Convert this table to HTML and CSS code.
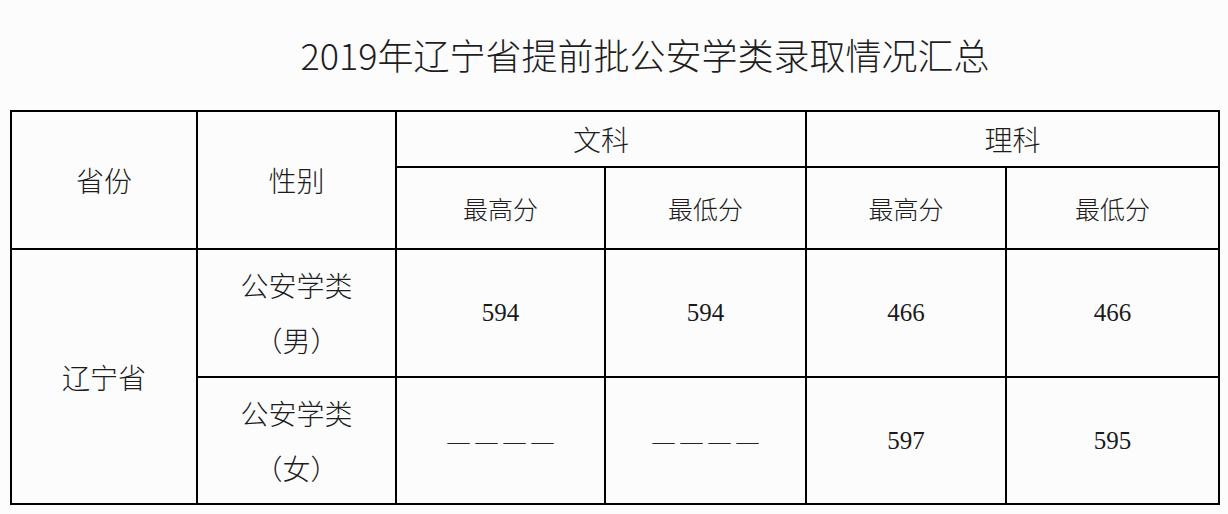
FILE: index.html
```html
<!DOCTYPE html>
<html lang="zh-CN">
<head>
<meta charset="utf-8">
<title>2019年辽宁省提前批公安学类录取情况汇总</title>
<link rel="stylesheet" href="styles.css">
</head>
<body>
<div class="page">
  <h1 class="title">2019年辽宁省提前批公安学类录取情况汇总</h1>
  <div class="grid">
    <div class="cell big r-span2 c1">省份</div>
    <div class="cell big r-span2 c2">性别</div>
    <div class="cell big c-span2">文科</div>
    <div class="cell big c-span2">理科</div>
    <div class="cell sub">最高分</div>
    <div class="cell sub">最低分</div>
    <div class="cell sub">最高分</div>
    <div class="cell sub">最低分</div>
    <div class="cell big r-span2 c1">辽宁省</div>
    <div class="cell big two">公安学类<br>（男）</div>
    <div class="cell num">594</div>
    <div class="cell num">594</div>
    <div class="cell num">466</div>
    <div class="cell num">466</div>
    <div class="cell big two">公安学类<br>（女）</div>
    <div class="cell dash"><span class="dashes">————</span></div>
    <div class="cell dash"><span class="dashes">————</span></div>
    <div class="cell num">597</div>
    <div class="cell num">595</div>
  </div>
</div>
</body>
</html>
```

FILE: styles.css
```css
html, body {
  margin: 0;
  padding: 0;
  background: #fdfcfd;
}

.page {
  padding: 0 8px 0 10px;
  font-family: "Noto Sans CJK SC", "Noto Sans", sans-serif;
  color: #1c1c1c;
}

.title {
  margin: 0;
  height: 110px;
  display: flex;
  align-items: center;
  justify-content: center;
  padding-left: 60px;
  padding-bottom: 2px;
  box-sizing: border-box;
  font-size: 36px;
  font-weight: 300;
  letter-spacing: 0;
  color: #1e1e1e;
}

.grid {
  display: grid;
  grid-template-columns: 186px 199px 209px 201px 200px 213px;
  grid-template-rows: 56px 82px 128px 127px;
  border-left: 2px solid #000;
  border-top: 2px solid #000;
  width: max-content;
}

.cell {
  box-sizing: border-box;
  border-right: 2px solid #000;
  border-bottom: 2px solid #000;
  display: flex;
  align-items: center;
  justify-content: center;
  text-align: center;
  font-weight: 300;
}

.r-span2 { grid-row: span 2; }
.c-span2 { grid-column: span 2; }

.big {
  font-size: 28px;
}

.sub {
  font-size: 25px;
}

.two {
  line-height: 55px;
}

.num {
  font-family: "Liberation Serif", "Times New Roman", serif;
  font-size: 25px;
  font-weight: 400;
  color: #1a1a1a;
}

.dash {
  padding-top: 2px;
}

.dashes {
  font-family: "Liberation Serif", serif;
  font-size: 22px;
  letter-spacing: 6px;
  padding-left: 6px;
  color: #222;
}
```
